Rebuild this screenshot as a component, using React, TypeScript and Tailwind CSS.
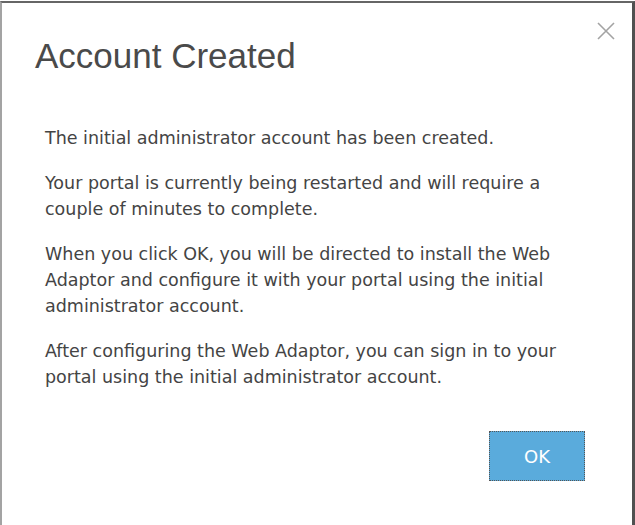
const paragraphs = [
  "The initial administrator account has been created.",
  "Your portal is currently being restarted and will require a couple of minutes to complete.",
  "When you click OK, you will be directed to install the Web Adaptor and configure it with your portal using the initial administrator account.",
  "After configuring the Web Adaptor, you can sign in to your portal using the initial administrator account.",
];

const App = () => {
  return (
    <div className="w-[635px] h-[525px] bg-white pt-px">
      <div className="relative flex flex-col h-full border-t-2 border-l-2 border-r-[3px] border-t-[#666666] border-l-[#a3a3a3] border-r-[#505050]">
        {/* Close button */}
        <button className="absolute right-[17px] top-[19px] w-[18px] h-[18px] text-[#a3a3a3]">
          <svg viewBox="0 0 18 18" className="w-[18px] h-[18px]" fill="none" stroke="currentColor" strokeWidth={1.6}>
            <path d="M1 1L17 17M17 1L1 17" />
          </svg>
        </button>

        <h1
          className="pl-[33px] pt-[32px] text-[35px] leading-[42px] text-[#4a4a4a]"
          style={{ fontFamily: '"Liberation Sans", Arial, sans-serif' }}
        >
          Account Created
        </h1>

        <div
          className="pl-[43px] w-[575px] pt-[48px] text-[17.5px] leading-[26px] text-[#444444] flex flex-col gap-[19px]"
          style={{ fontFamily: '"DejaVu Sans", Verdana, sans-serif' }}
        >
          {paragraphs.map((p) => (
            <p key={p}>{p}</p>
          ))}
        </div>

        <div className="flex justify-end pr-[47px] mt-[41px]">
          <button
            className="w-[96px] h-[50px] bg-[#5aabdc] border border-dotted border-[#555555] text-white text-[18px]"
            style={{ fontFamily: '"DejaVu Sans", Verdana, sans-serif' }}
          >
            OK
          </button>
        </div>
      </div>
    </div>
  );
};

export default App;
